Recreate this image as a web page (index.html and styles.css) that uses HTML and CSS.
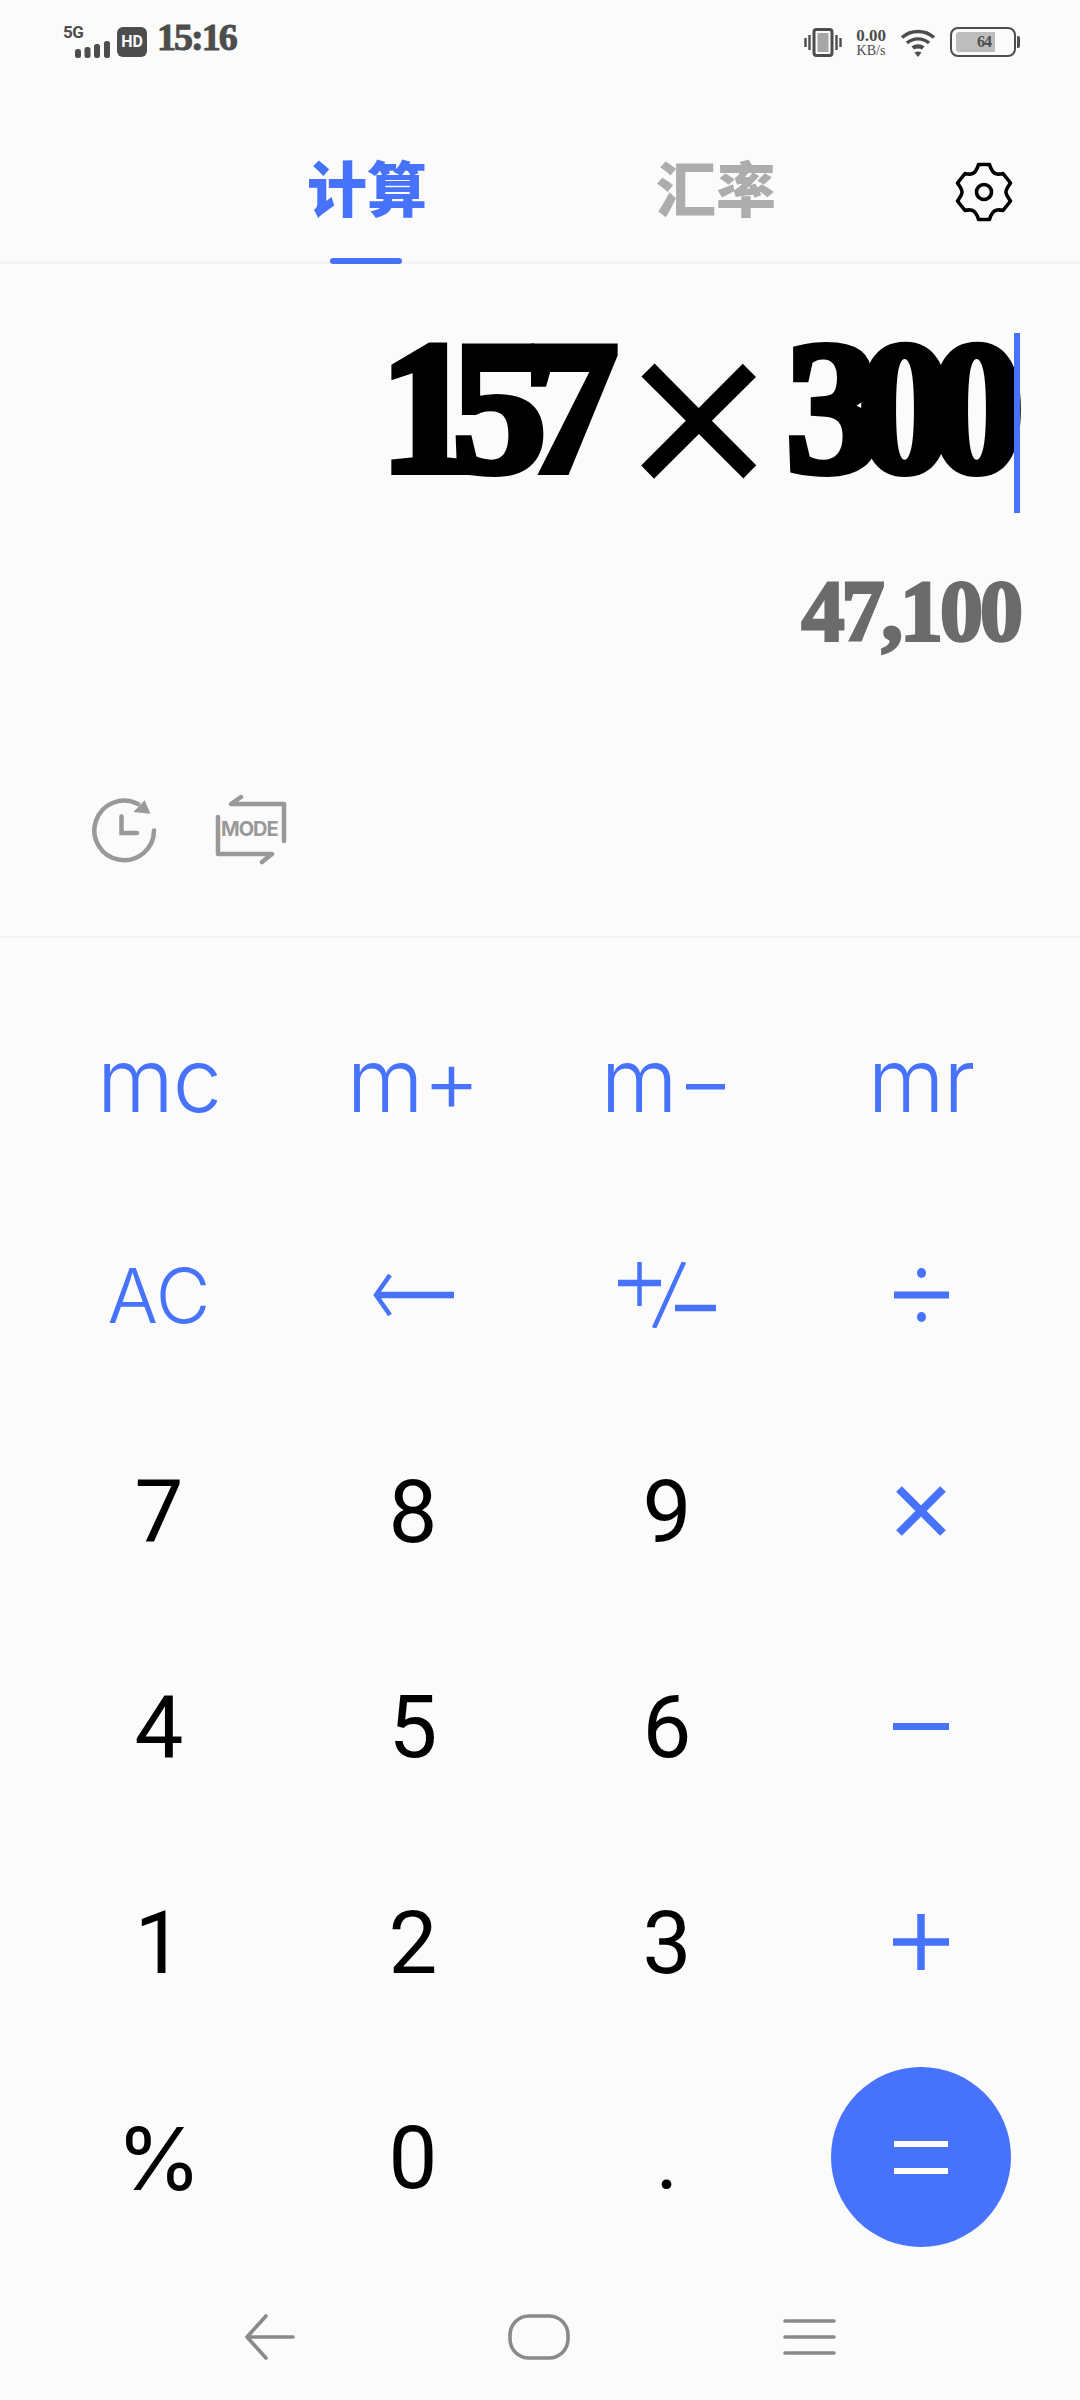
FILE: index.html
```html
<!DOCTYPE html>
<html lang="zh">
<head>
<meta charset="utf-8">
<title>计算</title>
<link rel="stylesheet" href="styles.css">
</head>
<body>
<div class="app">
  <header class="statusbar">
    <div class="status-left">
      <div class="net">
        <span class="net-label">5G</span>
        <svg class="signal" width="35" height="17" viewBox="0 0 35 17"><g fill="#4d4d4d"><rect x="0" y="8" width="6" height="9" rx="2.500"/><rect x="9.500" y="6" width="6" height="11" rx="2.500"/><rect x="19" y="3" width="6" height="14" rx="2.500"/><rect x="29" y="0" width="6" height="17" rx="2.500"/></g></svg>
      </div>
      <span class="hd">HD</span>
      <span class="clock">15:16</span>
    </div>
    <div class="status-right">
      <svg class="vib" width="38" height="29" viewBox="0 0 38 29"><g fill="none" stroke="#4d4d4d"><rect x="10" y="1.500" width="18" height="26" rx="2.500" stroke-width="3"/><path d="M1.500 10v9M5.500 7v15M32.500 7v15M36.500 10v9" stroke-width="2.400"/></g><rect x="13.500" y="5" width="11" height="19" fill="#a6a6a6"/></svg>
      <div class="speed"><span class="speed-num">0.00</span><span class="speed-unit">KB/s</span></div>
      <svg class="wifi" width="36" height="29" viewBox="0 0 35 29"><g fill="none" stroke="#4d4d4d" stroke-width="3.400"><path d="M1.500 9.500C10.500 1.500 24.500 1.500 33.500 9.500"/><path d="M6.500 15C13 9.500 22 9.500 28.500 15"/></g><path d="M11 18.500C15 15.500 20 15.500 24 18.500L21.500 21.500C19 20 16 20 13.500 21.500Z" fill="#4d4d4d"/><path d="M14 24.500C16.500 23 18.500 23 21 24.500L17.500 29Z" fill="#4d4d4d"/></svg>
      <div class="battery">
        <div class="battery-body"><div class="battery-fill"><span class="battery-num">64</span></div></div>
        <span class="battery-cap"></span>
      </div>
    </div>
  </header>

  <nav class="tabs">
    <div class="tab tab-active">计算<span class="tab-line"></span></div>
    <div class="tab tab-idle">汇率</div>
    <svg class="gear" width="58" height="60" viewBox="0 0 58 60"><path d="M23.500 2.500H34.500C36 8 39 11.500 42 12C44 12.300 46.500 12 48 11.500L55.500 21C53.500 24 51 27 51 30C51 33 53.500 36 55.500 39L48 48.500C46.500 48 44 47.700 42 48C39 48.500 36 52 34.500 57.500H23.500C22 52 19 48.500 16 48C14 47.700 11.500 48 10 48.500L2.500 39C4.500 36 7 33 7 30C7 27 4.500 24 2.500 21L10 11.500C11.500 12 14 12.300 16 12C19 11.500 22 8 23.500 2.500Z" fill="none" stroke="#000" stroke-width="3.600" stroke-linejoin="round"/><circle cx="29" cy="30" r="7.500" fill="none" stroke="#000" stroke-width="3.600"/></svg>
  </nav>

  <section class="display">
    <div class="expr"><span class="expr-num">157</span><span class="times">×</span><span class="expr-num">300</span><span class="caret"></span></div>
    <div class="result">47,100</div>
    <div class="tools">
      <svg class="tool-clock" width="68" height="68" viewBox="0 0 68 68"><g fill="none" stroke="#999" stroke-width="4.500" stroke-linecap="round"><path d="M63 33.500A29.800 29.800 0 1 1 47 7"/><path d="M30.500 19.500V36H46"/></g><path d="M53 3L60 16 43 16Z" fill="#999" transform="rotate(6 52 10)"/></svg>
      <div class="tool-mode">
        <svg class="mode-frame" width="72" height="72" viewBox="0 0 72 72"><g fill="none" stroke="#999" stroke-width="4.500" stroke-linecap="round" stroke-linejoin="round"><path d="M69 46V9H16L26 2"/><path d="M3 22V59H57L47 67"/></g></svg>
        <span class="mode-label">MODE</span>
      </div>
    </div>
  </section>

  <main class="keypad">
    <button class="key key-op key-mem">mc</button>
    <button class="key key-op key-mem">m+</button>
    <button class="key key-op key-mem">m−</button>
    <button class="key key-op key-mem">mr</button>

    <button class="key key-op key-ac">AC</button>
    <button class="key"><svg width="81" height="42" viewBox="0 0 81 42"><path d="M81 21H6" fill="none" stroke="#4672fc" stroke-width="6.500"/><path d="M17 1L3 21 17 41" fill="none" stroke="#4672fc" stroke-width="4.500"/></svg></button>
    <button class="key"><svg width="98" height="66" viewBox="0 0 98 66"><path d="M0 21H43M57 46H98" fill="none" stroke="#4672fc" stroke-width="6.500"/><path d="M21.500 0V44M66 0L36 66" fill="none" stroke="#4672fc" stroke-width="4.500"/></svg></button>
    <button class="key"><svg width="55" height="54" viewBox="0 0 55 54"><rect x="0" y="23.500" width="55" height="7" fill="#4672fc"/><ellipse cx="27.500" cy="5" rx="4.500" ry="5" fill="#4672fc"/><ellipse cx="27.500" cy="49" rx="4.500" ry="5" fill="#4672fc"/></svg></button>

    <button class="key key-digit">7</button>
    <button class="key key-digit">8</button>
    <button class="key key-digit">9</button>
    <button class="key"><svg width="50" height="50" viewBox="0 0 50 50"><path d="M3 3L47 47M47 3L3 47" fill="none" stroke="#4672fc" stroke-width="8"/></svg></button>

    <button class="key key-digit">4</button>
    <button class="key key-digit">5</button>
    <button class="key key-digit">6</button>
    <button class="key"><span class="bar"></span></button>

    <button class="key key-digit">1</button>
    <button class="key key-digit">2</button>
    <button class="key key-digit">3</button>
    <button class="key"><svg width="56" height="56" viewBox="0 0 56 56"><path d="M0 28H56M28 0V56" fill="none" stroke="#4672fc" stroke-width="7.500"/></svg></button>

    <button class="key key-digit key-pct">%</button>
    <button class="key key-digit">0</button>
    <button class="key key-digit">.</button>
    <button class="key"><span class="equals"><span class="eq-bar"></span><span class="eq-bar"></span></span></button>
  </main>

  <footer class="navbar">
    <svg width="51" height="46" viewBox="0 0 51 46"><path d="M49 23H4M22 2L3 23 22 44" fill="none" stroke="#8a8a8a" stroke-width="3.600" stroke-linecap="round" stroke-linejoin="round"/></svg>
    <svg width="62" height="46" viewBox="0 0 62 46"><rect x="2" y="2" width="58" height="42" rx="19" fill="none" stroke="#8a8a8a" stroke-width="3.600"/></svg>
    <svg width="53" height="36" viewBox="0 0 53 36"><path d="M2 2H51M2 18H51M2 34H51" fill="none" stroke="#8a8a8a" stroke-width="3.600" stroke-linecap="round"/></svg>
  </footer>
</div>
</body>
</html>
```
FILE: styles.css
```css
* { box-sizing: border-box; }
html, body { margin: 0; padding: 0; }
body { background: #fbfbfb; font-family: "Liberation Serif", "Noto Sans CJK SC", serif; }
.app { width: 1080px; height: 2400px; display: flex; flex-direction: column; background: #fbfbfb; overflow: hidden; }

.statusbar { height: 80px; display: flex; justify-content: space-between; align-items: flex-start; padding: 20px 60px 0 62px; color: #4d4d4d; }
.status-left { display: flex; align-items: flex-start; gap: 7px; }
.net { width: 48px; height: 37px; position: relative; margin-top: 4px; }
.net-label { position: absolute; left: 1px; top: 0; font: 700 17px/17px "Roboto", sans-serif; letter-spacing: -0.5px; }
.signal { position: absolute; left: 13px; top: 17px; }
.hd { width: 30px; height: 30px; margin-top: 7px; border-radius: 6px; background: #4d4d4d; color: #fbfbfb; font: 700 16px/30px "Roboto", sans-serif; text-align: center; }
.clock { font-size: 38px; line-height: 34px; font-weight: 700; margin-left: 3px; -webkit-text-stroke: 1px #4d4d4d; letter-spacing: -2px; }
.status-right { display: flex; align-items: center; gap: 10px; padding-top: 7px; }
.speed { display: flex; flex-direction: column; align-items: center; width: 38px; }
.speed-num { font-size: 17px; line-height: 16px; font-weight: 700; }
.speed-unit { font-size: 14px; line-height: 13px; }
.battery { display: flex; align-items: center; margin-left: 4px; }
.battery-body { width: 66px; height: 30px; border: 2.500px solid #4d4d4d; border-radius: 8px; padding: 3px; }
.battery-fill { width: 39px; height: 20px; margin-left: 1px; background: #bdbdbd; border-radius: 3px 0 0 3px; text-align: right; padding-right: 4px; }
.battery-num { font-size: 16px; line-height: 20px; font-weight: 700; display: block; letter-spacing: -1px; }
.battery-cap { width: 3px; height: 12px; margin-left: 1px; background: #4d4d4d; border-radius: 0 2px 2px 0; }

.tabs { height: 184px; position: relative; display: flex; padding-left: 307px; border-bottom: 3px solid #f3f3f3; }
.tab { font-family: "Noto Sans CJK SC", sans-serif; font-weight: 900; font-size: 60px; line-height: 84px; padding-top: 64px; position: relative; }
.tab-active { color: #4672fc; width: 120px; }
.tab-idle { color: #adadad; margin-left: 229px; width: 120px; }
.tab-line { position: absolute; left: 23px; bottom: -3px; width: 72px; height: 6px; border-radius: 3px; background: #4672fc; }
.gear { position: absolute; left: 955px; top: 82px; }

.display { height: 674px; padding: 0 60px; display: flex; flex-direction: column; border-bottom: 2px solid #f3f3f3; }
.expr { height: 184px; margin-top: 68px; padding: 0 18px 16px 0; display: flex; justify-content: flex-end; align-items: flex-end; position: relative; color: #000; }
.expr-num { font-size: 188px; line-height: 184px; font-weight: 700; -webkit-text-stroke: 8px #000; letter-spacing: -22px; }
.times { font: 400 258px/184px "Liberation Sans", sans-serif; margin: 0 12px -10px 27px; }
.caret { position: absolute; right: 0; top: 1px; width: 6px; height: 180px; background: #4672fc; }
.result { margin-top: 45px; height: 100px; text-align: right; font-size: 86px; line-height: 100px; font-weight: 700; color: #6b6b6b; -webkit-text-stroke: 3px #6b6b6b; letter-spacing: -3px; }
.tools { margin-top: 134px; margin-left: 31px; display: flex; gap: 56px; align-items: center; }
.tool-mode { width: 72px; height: 72px; position: relative; }
.mode-frame { display: block; }
.mode-label { position: absolute; left: 6px; top: 21px; color: #999; font: 700 20px/26px "Inter", sans-serif; letter-spacing: -1px; }

.keypad { flex: 1; display: grid; grid-template-columns: repeat(4, 254px); grid-auto-rows: 215.500px; padding: 34px 0 0 32px; }
.key { border: 0; padding: 0; background: none; display: flex; align-items: center; justify-content: center; color: #000; font: 400 87px/1 "Roboto", sans-serif; }
.key-digit { padding-top: 3px; }
.key-pct { font-family: "Inter", sans-serif; }
.key-op { color: #4672fc; }
.key-mem { font: 300 88px/1 "Inter", sans-serif; letter-spacing: -1px; }
.key-ac { font: 300 75px/1 "Inter", sans-serif; }
.bar { display: block; width: 56px; height: 7px; background: #4672fc; }
.equals { width: 180px; height: 180px; border-radius: 50%; background: #4672fc; display: flex; flex-direction: column; align-items: center; justify-content: center; gap: 21px; }
.eq-bar { display: block; width: 54px; height: 6px; background: #fff; }

.navbar { height: 100px; display: flex; justify-content: center; align-items: center; gap: 213px; margin-top: -20px; padding-bottom: 26px; }
```
